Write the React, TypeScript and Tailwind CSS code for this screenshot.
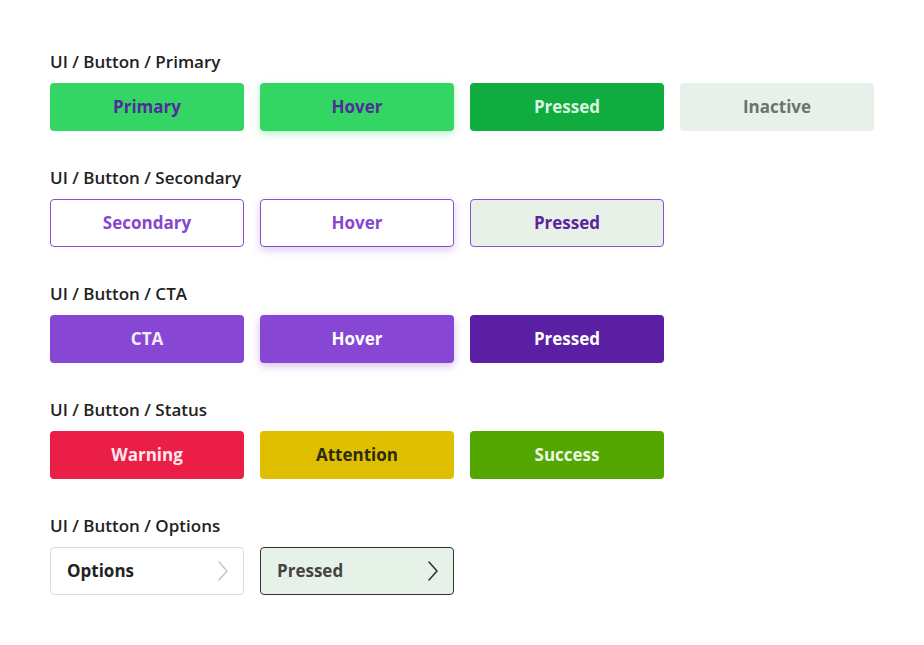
const font = { fontFamily: '"Open Sans", Lato, sans-serif' };

function Chevron({ color }: { color: string }) {
  return (
    <svg width="12" height="22" viewBox="0 0 12 22" fill="none">
      <path d="M2 2l8 9-8 9" stroke={color} strokeWidth="1.6" strokeLinecap="round" strokeLinejoin="round" />
    </svg>
  );
}

const btn = 'w-[194px] h-[48px] rounded-[4px] flex items-center justify-center text-[17px] font-bold';

function Group({ title, children }: { title: string; children: React.ReactNode }) {
  return (
    <div className="flex flex-col gap-[9px]">
      <div className="text-[17px] font-semibold leading-[24px] text-[#222]">{title}</div>
      <div className="flex gap-4">{children}</div>
    </div>
  );
}

export default function App() {
  return (
    <div className="w-[924px] h-[645px] bg-white pt-[50px] pl-[50px] flex flex-col gap-[35px]" style={font}>
      <Group title="UI / Button / Primary">
        <div className={`${btn} bg-[#34d663] text-[#4f2e9c]`}>Primary</div>
        <div className={`${btn} bg-[#34d663] text-[#4f2e9c] shadow-[0_3px_8px_rgba(52,214,99,0.35)]`}>Hover</div>
        <div className={`${btn} bg-[#10ac3f] text-[#d9f5df]`}>Pressed</div>
        <div className={`${btn} bg-[#e8f0ea] text-[#6b736e]`}>Inactive</div>
      </Group>
      <Group title="UI / Button / Secondary">
        <div className={`${btn} bg-white border border-[#8a4fd0] text-[#8547cf]`}>Secondary</div>
        <div className={`${btn} bg-white border border-[#8a4fd0] text-[#8547cf] shadow-[0_3px_8px_rgba(138,79,208,0.3)]`}>Hover</div>
        <div className={`${btn} bg-[#e7f1e8] border border-[#8a4fd0] text-[#5b24a0]`}>Pressed</div>
      </Group>
      <Group title="UI / Button / CTA">
        <div className={`${btn} bg-[#8747d4] text-[#f3ecfb]`}>CTA</div>
        <div className={`${btn} bg-[#8747d4] text-white shadow-[0_3px_8px_rgba(135,71,212,0.35)]`}>Hover</div>
        <div className={`${btn} bg-[#5a1fa3] text-white`}>Pressed</div>
      </Group>
      <Group title="UI / Button / Status">
        <div className={`${btn} bg-[#eb1e47] text-[#fde8ec]`}>Warning</div>
        <div className={`${btn} bg-[#e0bf00] text-[#2b2a12]`}>Attention</div>
        <div className={`${btn} bg-[#53a700] text-[#eef8e4]`}>Success</div>
      </Group>
      <Group title="UI / Button / Options">
        <div className={`${btn} justify-between! bg-white border border-[#dcdcdc] text-[#222] pl-4 pr-[14px]`}>
          <span>Options</span>
          <Chevron color="#c8c8c8" />
        </div>
        <div className={`${btn} justify-between! bg-[#e6f2e8] border border-[#333] text-[#444] pl-4 pr-[14px]`}>
          <span>Pressed</span>
          <Chevron color="#333" />
        </div>
      </Group>
    </div>
  );
}
